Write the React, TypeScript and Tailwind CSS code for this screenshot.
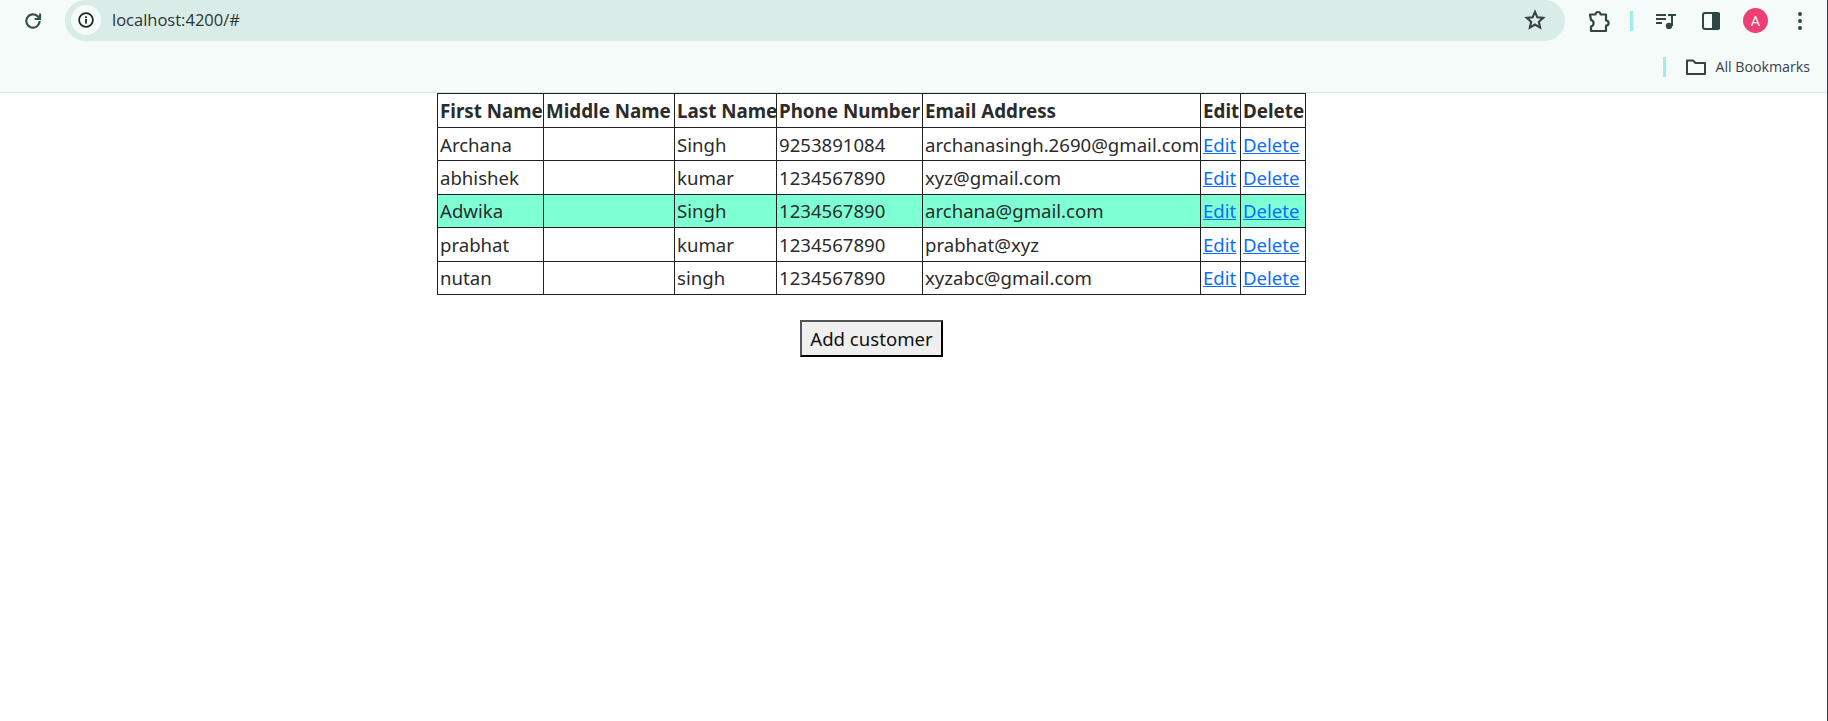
const font = "[font-family:'Noto_Sans','Open_Sans',sans-serif]";

const rows = [
  { first: "Archana", last: "Singh", phone: "9253891084", email: "archanasingh.2690@gmail.com" },
  { first: "abhishek", last: "kumar", phone: "1234567890", email: "xyz@gmail.com" },
  { first: "Adwika", last: "Singh", phone: "1234567890", email: "archana@gmail.com", active: true },
  { first: "prabhat", last: "kumar", phone: "1234567890", email: "prabhat@xyz" },
  { first: "nutan", last: "singh", phone: "1234567890", email: "xyzabc@gmail.com" },
];

const headers = ["First Name", "Middle Name", "Last Name", "Phone Number", "Email Address", "Edit", "Delete"];

function Toolbar() {
  return (
    <div className="h-[93px] shrink-0 bg-[#f5fbf9] border-b border-[#dde5e3]">
      <div className="flex h-[41px] items-center">
        <div className="w-[65px] flex justify-center pl-px">
          <svg width="20" height="20" viewBox="0 0 24 24" fill="none" stroke="#37504c" strokeWidth="2.6">
            <path d="M20 12a8 8 0 1 1-2.6-5.9L20 8.5" />
            <path d="M20.5 3v6.5H14" strokeWidth="2.4" />
          </svg>
        </div>
        <div className="w-[1500px] h-[41px] -mt-px bg-[#daece8] rounded-[21px] flex items-center pl-[6px]">
          <div className="w-[30px] h-[30px] rounded-full bg-[#f5fbf9] flex items-center justify-center">
            <svg width="16" height="16" viewBox="0 0 16 16" fill="none">
              <circle cx="8" cy="8" r="6.9" stroke="#1d2321" strokeWidth="1.7" />
              <rect x="7.1" y="7" width="1.8" height="4.6" fill="#1d2321" />
              <rect x="7.1" y="4.3" width="1.8" height="1.8" fill="#1d2321" />
            </svg>
          </div>
          <span className="ml-[11px] text-[16.5px] leading-none text-[#2a3533] font-['Open_Sans',sans-serif]">localhost:4200/#</span>
          <div className="ml-auto mr-[19px]">
            <svg width="22" height="22" viewBox="0 0 24 24" fill="none" stroke="#37423f" strokeWidth="2.3">
              <path d="M12 3.2l2.6 5.9 6.4.6-4.8 4.3 1.4 6.3-5.6-3.3-5.6 3.3 1.4-6.3L3 9.7l6.4-.6z" />
            </svg>
          </div>
        </div>
        <div className="ml-[21px] flex items-center">
          <svg width="24" height="24" viewBox="0 0 24 24" fill="none" stroke="#2f4743" strokeWidth="2.2" strokeLinejoin="round">
            <path d="M4 5.5h5.5a2.5 2.5 0 0 1 5 0H20v6a2.6 2.6 0 0 1 0 5.2V22H5v-4.4a3.4 3.4 0 0 0 0-6.6z" />
          </svg>
          <div className="ml-[20px] w-[3px] h-[20px] bg-[#9af0e4]" />
          <svg className="ml-[23px]" width="20" height="16" viewBox="0 0 20 16" fill="#2f4743">
            <rect x="0" y="1" width="10" height="2" />
            <rect x="0" y="5" width="10" height="2" />
            <rect x="0" y="9" width="6" height="2" />
            <rect x="12" y="1" width="8" height="2" />
            <rect x="15" y="1" width="2" height="12" />
            <circle cx="13" cy="13" r="3.2" />
          </svg>
          <svg className="ml-[26px]" width="18" height="18" viewBox="0 0 18 18" fill="none">
            <rect x="1" y="1" width="16" height="16" rx="2" stroke="#2f4743" strokeWidth="2" />
            <rect x="10" y="0.5" width="8" height="17" rx="1" fill="#2f4743" />
          </svg>
          <div className="ml-[23px] w-[25px] h-[25px] rounded-full bg-[#ee3f74] flex items-center justify-center text-white text-[14px] font-['Open_Sans',sans-serif]">A</div>
          <svg className="ml-[29px]" width="6" height="22" viewBox="0 0 6 22" fill="#2f4743">
            <circle cx="3" cy="4" r="2" />
            <circle cx="3" cy="11" r="2" />
            <circle cx="3" cy="18" r="2" />
          </svg>
        </div>
      </div>
      <div className="h-[51px] flex items-center justify-end pr-[17px]">
        <div className="w-[3px] h-[20px] bg-[#9af0e4] mr-[19px]" />
        <svg width="22" height="18" viewBox="0 0 22 18" fill="none" stroke="#37423f" strokeWidth="2" className="mr-[8px]">
          <path d="M2 15.5V2.5h6l2.5 2.5H20v11H2z" strokeLinejoin="round" />
        </svg>
        <span className="text-[14.2px] text-[#34424c] font-['Open_Sans',sans-serif]">All Bookmarks</span>
      </div>
    </div>
  );
}

export default function App() {
  return (
    <div className={`h-[721px] bg-white overflow-hidden flex flex-col border-r border-[#2f3b45] ${font}`}>
      <Toolbar />
      <div className="w-[1743px] flex flex-col items-center text-[#2b2b2b] text-[18.6px] leading-[26px]">
        <table className="border-collapse table-fixed w-[868px]">
          <colgroup>
            <col className="w-[106px]" />
            <col className="w-[131px]" />
            <col className="w-[102px]" />
            <col className="w-[146px]" />
            <col className="w-[278px]" />
            <col className="w-[40px]" />
            <col className="w-[65px]" />
          </colgroup>
          <thead>
            <tr className="h-[34px]">
              {headers.map((h) => (
                <th key={h} className="border border-[#212121] pl-[2px] pr-0 py-0 text-left text-[18.8px] font-bold whitespace-nowrap">
                  {h}
                </th>
              ))}
            </tr>
          </thead>
          <tbody>
            {rows.map((r) => (
              <tr key={r.first} className={r.active ? "h-[33.4px] bg-[#7fffd4]" : "h-[33.4px]"}>
                <td className="border border-[#212121] px-[2px] pt-px pb-0 whitespace-nowrap">{r.first}</td>
                <td className="border border-[#212121] px-[2px] pt-px pb-0"></td>
                <td className="border border-[#212121] px-[2px] pt-px pb-0 whitespace-nowrap">{r.last}</td>
                <td className="border border-[#212121] px-[2px] pt-px pb-0 whitespace-nowrap">{r.phone}</td>
                <td className="border border-[#212121] px-[2px] pt-px pb-0 whitespace-nowrap">{r.email}</td>
                <td className="border border-[#212121] px-[2px] pt-px pb-0"><a href="#" className="text-[#0d6efd] underline">Edit</a></td>
                <td className="border border-[#212121] px-[2px] pt-px pb-0"><a href="#" className="text-[#0d6efd] underline">Delete</a></td>
              </tr>
            ))}
          </tbody>
        </table>
        <button className="mt-[25px] w-[143px] h-[37px] pt-px bg-[#efefef] border-2 border-t-[#555555] border-l-[#555555] border-r-black border-b-black text-[#111111]">
          Add customer
        </button>
      </div>
    </div>
  );
}
